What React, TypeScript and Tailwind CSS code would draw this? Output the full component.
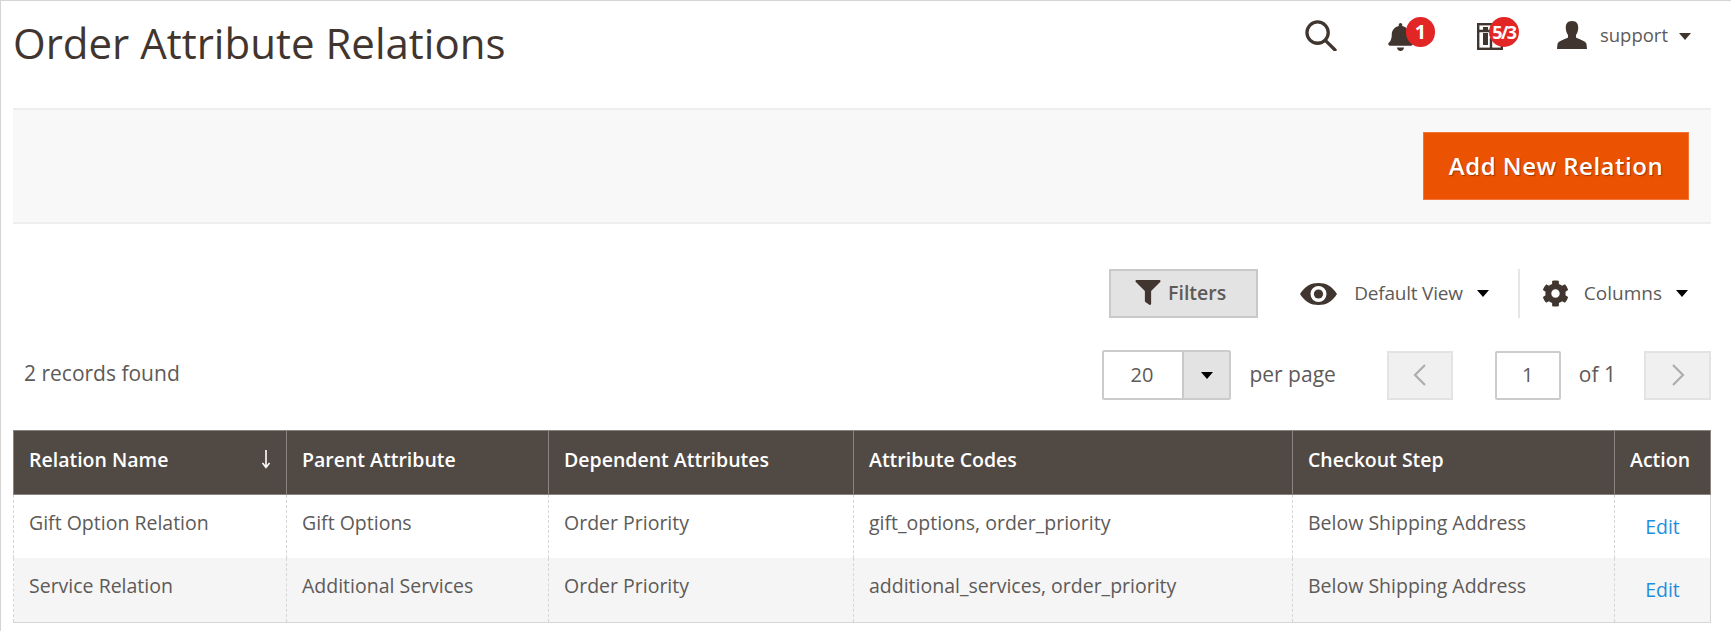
import { FaBell, FaCog, FaFilter } from 'react-icons/fa';

const Caret = ({ className = 'border-t-black' }: { className?: string }) => (
  <span className={`inline-block w-0 h-0 border-x-[6px] border-x-transparent border-t-[7px] ${className}`}></span>
);

const Badge = ({ text, className }: { text: string; className: string }) => (
  <span className={`absolute flex items-center justify-center rounded-full bg-[#e22626] text-white font-bold ${className}`}>
    {text}
  </span>
);

const rows = [
  ['Gift Option Relation', 'Gift Options', 'Order Priority', 'gift_options, order_priority', 'Below Shipping Address'],
  ['Service Relation', 'Additional Services', 'Order Priority', 'additional_services, order_priority', 'Below Shipping Address'],
];

const headers = ['Parent Attribute', 'Dependent Attributes', 'Attribute Codes', 'Checkout Step'];

const App = () => {
  return (
    <div className="w-[1731px] h-[631px] overflow-hidden bg-white border-t border-l border-[#d4d4d4] text-[#5d5a58] font-['Open_Sans',sans-serif]">
      <header className="h-[107px] flex justify-between pl-[12px] pr-[40px]">
        <h1 className="text-[42px] leading-[56px] pt-[14px] font-normal text-[#41362f] h-fit">Order Attribute Relations</h1>
        <div className="flex items-start pt-[19px]">
          <svg className="w-[33px] h-[31px] mr-[51px]" viewBox="0 0 34 32" fill="none" stroke="#41362f" strokeWidth="3.4">
            <circle cx="14" cy="13" r="11" />
            <path d="M22 21 L32 31" strokeLinecap="round" />
          </svg>
          <div className="relative w-[89px] h-[32px]">
            <FaBell className="absolute left-0 top-[3px] text-[#41362f] w-[25px] h-[28px]" />
            <Badge text="1" className="left-[18px] top-[-3px] w-[29px] h-[30px] text-[20px]" />
          </div>
          <div className="relative w-[80px] h-[32px]">
            <svg className="absolute left-0 top-[3px] w-[26px] h-[27px]" viewBox="0 0 26 27" fill="none" stroke="#41362f" strokeWidth="2.4">
              <rect x="1.2" y="1.2" width="23.6" height="24.6" />
              <path d="M1 8 H25 M14 15 H25 M14 15 V26" />
              <rect x="6" y="4" width="5" height="3" fill="#41362f" stroke="none" />
              <rect x="6" y="10" width="5" height="12" fill="#41362f" stroke="none" />
            </svg>
            <Badge text="5/3" className="left-[12px] top-[-3px] w-[30px] h-[30px] text-[18px] tracking-[-1.5px]" />
          </div>
          <svg className="w-[30px] h-[28px] mt-[1px] mr-[13px]" viewBox="0 0 30 28" fill="#41362f">
            <path d="M15 0 C10 0 8.5 3.5 8.8 7.5 C8.9 10 9.8 12.4 11 14 L11 16.5 C8 18.5 1.5 19.5 0.5 23 L0 28 L30 28 L29.5 23 C28.5 19.5 22 18.5 19 16.5 L19 14 C20.2 12.4 21.1 10 21.2 7.5 C21.5 3.5 20 0 15 0 Z" />
          </svg>
          <span className="text-[18.5px] leading-[30px] mr-[11px]">support</span>
          <Caret className="border-t-[#41362f] mt-[13px]" />
        </div>
      </header>

      <div className="ml-[12px] w-[1698px] h-[116px] flex items-center justify-end pr-[22px] bg-[#f8f8f8] border-y-2 border-[#eeeeee]">
        <button className="w-[266px] h-[68px] bg-[#eb5202] border border-[#f2763a] text-white text-[24px] font-semibold tracking-[0.5px] [text-shadow:1px_1px_1px_rgba(0,0,0,0.35)]">
          Add New Relation
        </button>
      </div>

      <div className="ml-[12px] w-[1698px]">
        <div className="flex justify-end items-center h-[49px] mt-[45px] pr-[23px]">
          <button className="w-[149px] h-[49px] pb-[2px] pr-[6px] flex items-center justify-center gap-[7px] bg-[#e3e3e3] border-2 border-[#c9c9c9] text-[19.5px] font-semibold text-[#5d5a58]">
            <FaFilter className="w-[26px] h-[25px] text-[#41362f]" />
            Filters
          </button>
          <svg className="ml-[42px] w-[37px] h-[22px]" viewBox="0 0 37 22" fill="#41362f">
            <path fillRule="evenodd" d="M0 11 C5 3 11 0 18.5 0 C26 0 32 3 37 11 C32 19 26 22 18.5 22 C11 22 5 19 0 11 Z M18.5 3 A8 8 0 1 0 18.5 19 A8 8 0 1 0 18.5 3 Z" />
            <circle cx="18.5" cy="11" r="4.6" />
          </svg>
          <span className="ml-[17px] text-[19px] tracking-[-0.2px]">Default View</span>
          <Caret className="border-t-black ml-[14px]" />
          <div className="w-[2px] h-[49px] bg-[#e6e6e6] ml-[29px]"></div>
          <FaCog className="ml-[22px] w-[27px] h-[27px] text-[#41362f]" />
          <span className="ml-[15px] text-[19px]">Columns</span>
          <Caret className="border-t-black ml-[14px]" />
        </div>

        <div className="flex items-center h-[50px] mt-[32px]">
          <span className="ml-[11px] text-[21px] mt-[-2px]">2 records found</span>
          <div className="ml-auto flex items-center">
            <div className="flex w-[129px] h-[50px] border-2 border-[#cccccc] rounded-[2px]">
              <span className="w-[78px] pr-[3px] flex items-center justify-center text-[20px]">20</span>
              <span className="flex-1 flex items-center justify-center bg-[#e3e3e3] border-l-2 border-[#c9c9c9]">
                <Caret />
              </span>
            </div>
            <span className="ml-[18px] text-[21px]">per page</span>
            <span className="ml-[51px] w-[66px] h-[49px] flex items-center justify-center bg-[#f0f0f0] border-2 border-[#e3e3e3]">
              <svg className="w-[14px] h-[24px]" viewBox="0 0 14 24" fill="none" stroke="#adadad" strokeWidth="2.2"><path d="M12 2 L2 12 L12 22" /></svg>
            </span>
            <span className="ml-[42px] w-[66px] h-[49px] flex items-center justify-center border-2 border-[#cccccc] rounded-[2px] text-[20px]">1</span>
            <span className="ml-[18px] text-[21px]">of 1</span>
            <span className="ml-[28px] w-[67px] h-[49px] flex items-center justify-center bg-[#f0f0f0] border-2 border-[#e3e3e3]">
              <svg className="w-[14px] h-[24px]" viewBox="0 0 14 24" fill="none" stroke="#adadad" strokeWidth="2.2"><path d="M2 2 L12 12 L2 22" /></svg>
            </span>
          </div>
        </div>

        <table className="w-[1697px] mt-[30px] table-fixed border-collapse text-[19.5px]">
          <colgroup>
            <col className="w-[273px]" />
            <col className="w-[262px]" />
            <col className="w-[305px]" />
            <col className="w-[439px]" />
            <col className="w-[322px]" />
            <col className="w-[96px]" />
          </colgroup>
          <thead>
            <tr className="h-[64px] bg-[#514943] text-white text-left">
              <th className="px-[15px] pb-[6px] font-semibold border border-[#8a837f]">
                <div className="flex items-center justify-between">
                  Relation Name
                  <svg className="w-[10px] h-[19px]" viewBox="0 0 10 19" fill="none" stroke="white" strokeWidth="1.6"><path d="M5 0 V17 M1.5 13 L5 17.5 L8.5 13" /></svg>
                </div>
              </th>
              {headers.map((h) => (
                <th key={h} className="px-[15px] pb-[6px] font-semibold border border-[#8a837f]">{h}</th>
              ))}
              <th className="px-[15px] pb-[6px] font-semibold border border-[#8a837f]">Action</th>
            </tr>
          </thead>
          <tbody>
            {rows.map((row, i) => (
              <tr key={row[0]} className={i === 1 ? 'h-[65px] bg-[#f5f5f5] border-b border-[#d6d6d6]' : 'h-[63px] bg-white'}>
                {row.map((cell, j) => (
                  <td key={j} className={j === 0 ? 'px-[15px] pb-[8px] border-l border-l-[#d6d6d6] border-r border-r-[#d6d6d6] border-dashed' : 'px-[15px] pb-[8px] border-r border-dashed border-[#d6d6d6]'}>
                    {cell}
                  </td>
                ))}
                <td className="text-center text-[#1f8ee0] border-r border-[#d6d6d6]">Edit</td>
              </tr>
            ))}
          </tbody>
        </table>
      </div>
    </div>
  );
};

export default App;
